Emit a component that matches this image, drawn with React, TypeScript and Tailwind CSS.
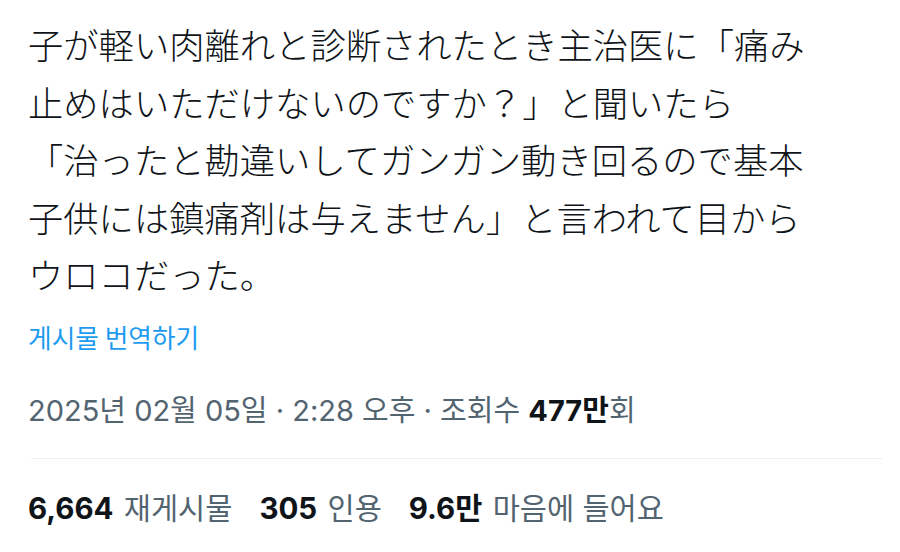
import React from "react";

export default function App() {
  return (
    <div className="w-[900px] h-[552px] bg-white overflow-hidden">
      <div className="pl-[28px] pt-[15px]">
        <div className="text-[35.3px] leading-[57.5px] text-[#0f1419] whitespace-nowrap font-light font-['Noto_Sans_CJK_JP',sans-serif]">
          子が軽い肉離れと診断されたとき主治医に「痛み
          <br />
          止めはいただけないのですか？」と聞いたら
          <br />
          「治ったと勘違いしてガンガン動き回るので基本
          <br />
          子供には鎮痛剤は与えません」と言われて目から
          <br />
          ウロコだった。
        </div>
        <div className="mt-[18px] text-[25.7px] leading-[32px] text-[#1d9bf0] font-['Noto_Sans_CJK_KR',sans-serif]">
          게시물 번역하기
        </div>
        <div className="mt-[38px] text-[29px] leading-[40px] text-[#536471] whitespace-nowrap font-['Inter','Noto_Sans_CJK_KR',sans-serif]">
          2025년 02월 05일 · 2:28 오후 · 조회수{" "}
          <span className="font-bold text-[#0f1419]">477만</span>회
        </div>
      </div>
      <div className="ml-[31px] mr-[18px] mt-[27px] h-px bg-[#eceef0]" />
      <div className="pl-[28px] mt-[29px] flex items-center gap-[27px] text-[29.5px] leading-[40px] whitespace-nowrap font-['Inter','Noto_Sans_CJK_KR',sans-serif]">
        <div>
          <span className="font-bold text-[#0f1419]">6,664</span>{" "}
          <span className="ml-[2px] text-[#536471]">재게시물</span>
        </div>
        <div>
          <span className="font-bold text-[#0f1419]">305</span>{" "}
          <span className="ml-[2px] text-[#536471]">인용</span>
        </div>
        <div>
          <span className="font-bold text-[#0f1419]">9.6만</span>{" "}
          <span className="ml-[2px] text-[#536471]">마음에 들어요</span>
        </div>
      </div>
    </div>
  );
}
